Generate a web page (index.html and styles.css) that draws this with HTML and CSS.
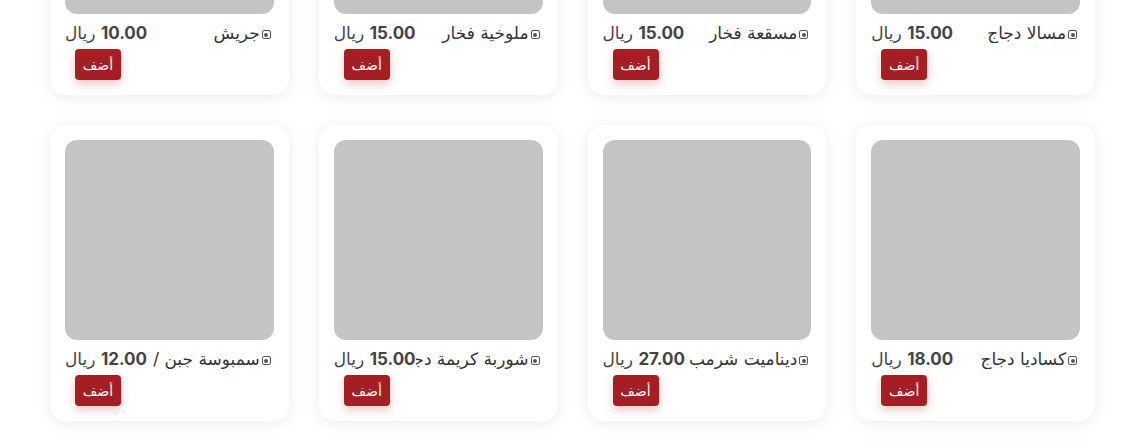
FILE: index.html
```html
<!DOCTYPE html>
<html lang="ar" dir="rtl">
<head>
<meta charset="utf-8">
<link rel="stylesheet" href="styles.css">
</head>
<body>
<main class="grid">
  <div class="card"><div class="img"></div><div class="row"><span class="name"><i class="mark"></i>مسالا دجاج</span><span class="price"><b>15.00</b> ريال</span></div><button class="add">أضف</button></div>
  <div class="card"><div class="img"></div><div class="row"><span class="name"><i class="mark"></i>مسقعة فخار</span><span class="price"><b>15.00</b> ريال</span></div><button class="add">أضف</button></div>
  <div class="card"><div class="img"></div><div class="row"><span class="name"><i class="mark"></i>ملوخية فخار</span><span class="price"><b>15.00</b> ريال</span></div><button class="add">أضف</button></div>
  <div class="card"><div class="img"></div><div class="row"><span class="name"><i class="mark"></i>جريش</span><span class="price"><b>10.00</b> ريال</span></div><button class="add">أضف</button></div>

  <div class="card"><div class="img"></div><div class="row"><span class="name"><i class="mark"></i>كساديا دجاج</span><span class="price"><b>18.00</b> ريال</span></div><button class="add">أضف</button></div>
  <div class="card"><div class="img"></div><div class="row"><span class="name"><i class="mark"></i>ديناميت شرمب</span><span class="price"><b>27.00</b> ريال</span></div><button class="add">أضف</button></div>
  <div class="card"><div class="img"></div><div class="row"><span class="name"><i class="mark"></i>شوربة كريمة دجاج</span><span class="price"><b>15.00</b> ريال</span></div><button class="add">أضف</button></div>
  <div class="card"><div class="img"></div><div class="row"><span class="name"><i class="mark"></i>سمبوسة جبن /&nbsp;</span><span class="price"><b>12.00</b> ريال</span></div><button class="add">أضف</button></div>

  <div class="card"><div class="img"></div><div class="row"><span class="name"><i class="mark"></i>سلطة</span><span class="price"><b>10.00</b> ريال</span></div><button class="add">أضف</button></div>
</main>
</body>
</html>
```
FILE: styles.css
```css
html, body {
  margin: 0;
  padding: 0;
  background: #ffffff;
  overflow: hidden;
}
body {
  font-family: "DejaVu Sans", "Noto Sans", sans-serif;
  color: #3a3a3a;
}
.grid {
  display: grid;
  grid-template-columns: repeat(4, minmax(0, 1fr));
  column-gap: 30px;
  row-gap: 30px;
  width: 1045px;
  margin: -201px 53px 0 0;
}
.card {
  background: #fff;
  border-radius: 16px;
  box-shadow: 0 2px 16px rgba(0, 0, 0, 0.08);
  padding: 15px;
  height: 296px;
  box-sizing: border-box;
  display: flex;
  flex-direction: column;
  min-width: 0;
}
.img {
  height: 200px;
  background: #c4c4c4;
  border-radius: 12px;
}
.row {
  display: flex;
  align-items: center;
  justify-content: space-between;
  margin-top: 6px;
  height: 26px;
  padding-right: 3px;
}
.name {
  flex: 1 1 auto;
  min-width: 0;
  white-space: nowrap;
  overflow: hidden;
  font-size: 17px;
  color: #333;
  display: flex;
  align-items: center;
}
.mark {
  flex: none;
  width: 7px;
  height: 7px;
  border: 1.5px solid #555;
  border-radius: 2px;
  margin-left: 2px;
  margin-top: 3px;
  position: relative;
  display: inline-block;
}
.mark::after {
  content: "";
  position: absolute;
  left: 1.5px;
  top: 1.5px;
  width: 4px;
  height: 4px;
  border-radius: 50%;
  background: #555;
}
.price {
  flex: none;
  white-space: nowrap;
  font-size: 17px;
  color: #444;
}
.price b {
  font-family: "Inter", "DejaVu Sans", sans-serif;
  font-size: 17px;
  font-weight: 700;
  letter-spacing: -0.3px;
}
.add {
  align-self: flex-end;
  margin-top: 3px;
  margin-left: 10px;
  width: 46px;
  height: 31px;
  border: none;
  border-radius: 4px;
  background: #a51e24;
  color: #fff;
  font-family: "DejaVu Sans", sans-serif;
  font-size: 14px;
  padding: 0;
  box-shadow: 0 4px 10px rgba(165, 30, 36, 0.25);
}
```
